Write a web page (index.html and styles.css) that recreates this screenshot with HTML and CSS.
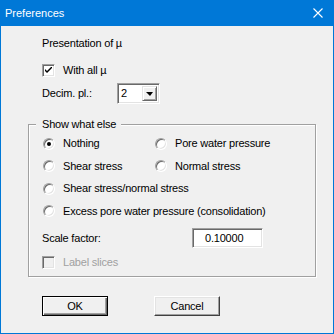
FILE: index.html
```html
<!DOCTYPE html>
<html>
<head>
<meta charset="utf-8">
<link rel="stylesheet" href="styles.css">
</head>
<body>
<div class="window">
  <div class="titlebar">
    <span class="title">Preferences</span>
    <svg class="close" width="10" height="10" viewBox="0 0 10 10"><path d="M0.5 0.5 L9.5 9.5 M9.5 0.5 L0.5 9.5" stroke="#fff" stroke-width="1.1" fill="none"/></svg>
  </div>
  <div class="client">
    <div class="row r-pres">Presentation of µ</div>
    <div class="row r-check">
      <span class="checkbox"><svg width="7" height="7" viewBox="0 0 7 7"><path d="M0 2 L0 4 L2 6 L7 1 L7 -1 L2 4 Z" fill="#000"/></svg></span>
      <span class="lbl">With all µ</span>
    </div>
    <div class="row r-decim">
      <span class="decim-lbl">Decim. pl.:</span>
      <span class="combo"><span class="combo-val">2</span><span class="combo-btn"><span class="tri"></span></span></span>
    </div>
    <div class="group">
      <span class="legend">Show what else</span>
      <div class="radios">
        <div class="ropt"><span class="radio on"></span><span class="lbl">Nothing</span></div>
        <div class="ropt"><span class="radio"></span><span class="lbl">Pore water pressure</span></div>
        <div class="ropt"><span class="radio"></span><span class="lbl">Shear stress</span></div>
        <div class="ropt"><span class="radio"></span><span class="lbl">Normal stress</span></div>
        <div class="ropt wide"><span class="radio"></span><span class="lbl">Shear stress/normal stress</span></div>
        <div class="ropt wide"><span class="radio"></span><span class="lbl">Excess pore water pressure (consolidation)</span></div>
      </div>
      <div class="scale">
        <span class="scale-lbl">Scale factor:</span>
        <span class="textbox">0.10000</span>
      </div>
      <div class="row r-label">
        <span class="checkbox disabled"></span>
        <span class="lbl gray">Label slices</span>
      </div>
    </div>
    <div class="buttons">
      <span class="btn default"><span class="btn-in">OK</span></span>
      <span class="btn"><span class="btn-in">Cancel</span></span>
    </div>
  </div>
</div>
</body>
</html>
```
FILE: styles.css
```css
html, body {
  margin: 0;
  padding: 0;
}
body {
  font-family: "Liberation Sans", Arial, sans-serif;
  font-size: 11px;
  letter-spacing: -0.2px;
  color: #000;
}
.window {
  width: 334px;
  height: 334px;
  box-sizing: border-box;
  border: 1px solid #0078d7;
  border-top: 0;
  background: #f0f0f0;
  display: flex;
  flex-direction: column;
}
.titlebar {
  height: 26px;
  background: #0078d7;
  display: flex;
  align-items: center;
  justify-content: space-between;
  padding: 0 10px 0 4px;
  flex: none;
}
.title {
  color: #fff;
  font-size: 11px;
  letter-spacing: 0;
  line-height: 13px;
  padding-top: 1px;
}
.close {
  display: block;
  margin-top: 0;
}
.client {
  display: flex;
  flex-direction: column;
  padding-left: 41px;
}
.row {
  display: flex;
  align-items: center;
  height: 13px;
  line-height: 13px;
}
.r-pres { margin-top: 11px; }
.r-check { margin-top: 14px; }
.checkbox {
  width: 13px;
  height: 13px;
  box-sizing: border-box;
  background: #fff;
  border-top: 1px solid #a0a0a0;
  border-left: 1px solid #a0a0a0;
  border-right: 1px solid #fff;
  border-bottom: 1px solid #fff;
  box-shadow: inset 1px 1px 0 #696969, inset -1px -1px 0 #e3e3e3;
  display: flex;
  align-items: center;
  justify-content: center;
  flex: none;
}
.checkbox svg { display: block; }
.checkbox.disabled { background: #f0f0f0; }
.lbl { margin-left: 8px; white-space: nowrap; }
.gray { color: #a0a0a0; }
.r-decim {
  margin-top: 6px;
  height: 21px;
}
.decim-lbl { width: 75px; }
.combo {
  width: 43px;
  height: 21px;
  box-sizing: border-box;
  background: #fff;
  border-top: 1px solid #a0a0a0;
  border-left: 1px solid #a0a0a0;
  border-right: 1px solid #fff;
  border-bottom: 1px solid #fff;
  box-shadow: inset 1px 1px 0 #696969, inset -1px -1px 0 #e3e3e3;
  display: flex;
  align-items: center;
  padding: 2px;
}
.combo-val { flex: 1; padding-left: 1px; }
.combo-btn {
  width: 15px;
  height: 15px;
  box-sizing: border-box;
  background: #f0f0f0;
  border-top: 1px solid #e3e3e3;
  border-left: 1px solid #e3e3e3;
  border-right: 1px solid #696969;
  border-bottom: 1px solid #696969;
  box-shadow: inset 1px 1px 0 #fff, inset -1px -1px 0 #a0a0a0;
  display: flex;
  align-items: center;
  justify-content: center;
}
.tri {
  width: 0;
  height: 0;
  border-left: 4px solid transparent;
  border-right: 3px solid transparent;
  border-top: 4px solid #000;
  margin-top: 1px;
}
.group {
  position: relative;
  margin-top: 20px;
  margin-left: -14px;
  width: 288px;
  height: 153px;
  box-sizing: border-box;
  border: 1px solid #a0a0a0;
  box-shadow: inset 1px 1px 0 #fff, 1px 1px 0 #fff;
  padding: 12px 0 0 14px;
  display: flex;
  flex-direction: column;
}
.legend {
  position: absolute;
  top: -7px;
  left: 7px;
  padding: 0 5px 0 6px;
  background: #f0f0f0;
  line-height: 13px;
}
.radios {
  display: grid;
  grid-template-columns: 112px 1fr;
  row-gap: 9.5px;
}
.ropt {
  display: flex;
  align-items: center;
  height: 13px;
  line-height: 13px;
}
.ropt.wide { grid-column: 1 / 3; }
.radio {
  width: 12px;
  height: 12px;
  box-sizing: border-box;
  border-radius: 50%;
  background: #fff;
  border: 1px solid;
  border-color: #a0a0a0 #fff #fff #a0a0a0;
  box-shadow: inset 1px 1px 0 #696969, inset -1px -1px 0 #e3e3e3;
  display: flex;
  align-items: center;
  justify-content: center;
  flex: none;
}
.radio.on::after {
  content: "";
  width: 4px;
  height: 4px;
  border-radius: 50%;
  background: #000;
}
.scale {
  display: flex;
  align-items: center;
  margin-top: 10px;
  height: 20px;
}
.scale-lbl { width: 150px; padding-left: 0; margin-left: -1px; }
.textbox {
  width: 71px;
  height: 20px;
  box-sizing: border-box;
  background: #fff;
  border-top: 1px solid #a0a0a0;
  border-left: 1px solid #a0a0a0;
  border-right: 1px solid #fff;
  border-bottom: 1px solid #fff;
  box-shadow: inset 1px 1px 0 #696969, inset -1px -1px 0 #e3e3e3;
  padding-left: 12px;
  line-height: 18px;
}
.r-label {
  margin-top: 8px;
  margin-left: -1px;
}
.buttons {
  display: flex;
  gap: 46px;
  margin-top: 19px;
}
.btn {
  width: 66px;
  height: 20px;
  box-sizing: border-box;
  background: #f0f0f0;
  border-top: 1px solid #fff;
  border-left: 1px solid #fff;
  border-right: 1px solid #404040;
  border-bottom: 1px solid #404040;
  box-shadow: inset -1px -1px 0 #a0a0a0, inset 1px 1px 0 #e3e3e3;
  display: flex;
  align-items: center;
  justify-content: center;
}
.btn.default {
  border: 1px solid #000;
  box-shadow: inset 1px 1px 0 #fff, inset -1px -1px 0 #696969, inset -2px -2px 0 #a0a0a0;
}
.btn-in { line-height: 13px; }
```
